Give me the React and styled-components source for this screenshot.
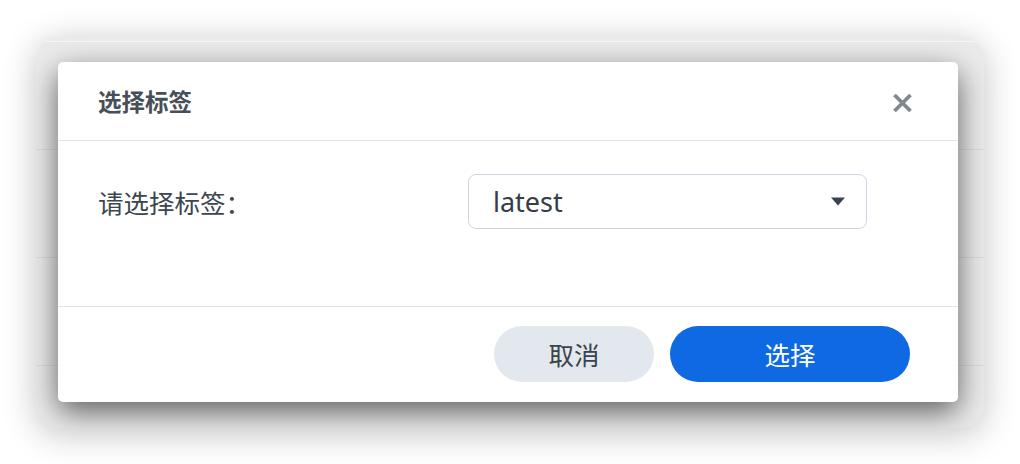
import React from "react";
import styled, { createGlobalStyle } from "styled-components";

const Global = createGlobalStyle`
  html, body { margin: 0; padding: 0; background: #ffffff; }
  body { font-family: "Noto Sans", "Noto Sans CJK SC", sans-serif; }
  * { box-sizing: border-box; }
`;

const Page = styled.div`
  width: 1020px;
  height: 464px;
  padding: 36px;
  background: #ffffff;
`;

const Window = styled.div`
  position: relative;
  width: 948px;
  height: 392px;
  border-radius: 24px;
  background: #ebebeb;
  box-shadow: 0 6px 34px rgba(0, 0, 0, 0.24);
  overflow: hidden;
`;

const TopStrip = styled.div`
  height: 6px;
  border-bottom: 1px solid #f4f6f8;
`;

const BgRow = styled.div`
  height: 108px;
  border-bottom: 1px solid #d9dee4;
`;

const Dialog = styled.div`
  position: absolute;
  left: 22px;
  top: 26px;
  width: 900px;
  height: 340px;
  background: #ffffff;
  border-radius: 5px;
  box-shadow: 0 10px 30px rgba(0, 0, 0, 0.6);
  display: flex;
  flex-direction: column;
`;

const Header = styled.div`
  height: 79px;
  flex: none;
  display: flex;
  align-items: center;
  justify-content: space-between;
  padding: 0 45px 0 40px;
  border-bottom: 1px solid #dbe3eb;
`;

const Title = styled.div`
  font-family: "Noto Sans CJK SC", sans-serif;
  font-weight: 700;
  font-size: 23.5px;
  color: #474f59;
  line-height: 1;
  margin-top: 2px;
`;

const CloseButton = styled.button`
  border: 0;
  background: none;
  padding: 0;
  width: 21px;
  height: 20px;
  display: flex;
  align-items: center;
  justify-content: center;
  margin-top: 4px;
  cursor: pointer;
`;

const Body = styled.div`
  height: 166px;
  flex: none;
  padding: 33px 0 0 40px;
  border-bottom: 1px solid #dbe3eb;
`;

const FieldRow = styled.div`
  display: grid;
  grid-template-columns: 370px 399px;
  align-items: center;
`;

const Label = styled.div`
  font-family: "Noto Sans CJK SC", sans-serif;
  font-size: 25.5px;
  color: #3c4550;
  line-height: 1;
`;

const Select = styled.div`
  height: 55px;
  border: 1.5px solid #cbd6e2;
  border-radius: 8px;
  display: flex;
  align-items: center;
  justify-content: space-between;
  padding: 0 20px 0 24px;
`;

const SelectValue = styled.span`
  font-family: "Noto Sans", sans-serif;
  font-size: 27px;
  color: #343d48;
  line-height: 1;
  margin-top: -1px;
`;

const Footer = styled.div`
  flex: 1;
  display: flex;
  align-items: center;
  justify-content: flex-end;
  gap: 16px;
  padding: 0 48px 1px 0;
`;

const Button = styled.button`
  height: 56px;
  width: ${(p) => p.$w}px;
  border: 0;
  border-radius: 28px;
  background: ${(p) => (p.$primary ? "#0f69e3" : "#e2e8ee")};
  color: ${(p) => (p.$primary ? "#ffffff" : "#3b434c")};
  font-family: "Noto Sans CJK SC", sans-serif;
  font-size: 25.5px;
  line-height: 1;
  padding: 0;
  cursor: pointer;
`;

export default function App() {
  return (
    <>
      <Global />
      <Page>
        <Window>
          <TopStrip />
          <BgRow />
          <BgRow />
          <BgRow />
          <Dialog>
            <Header>
              <Title>选择标签</Title>
              <CloseButton aria-label="关闭">
                <svg width="21" height="20" viewBox="0 0 21 20">
                  <path
                    d="M2.5 2 L18.5 18 M18.5 2 L2.5 18"
                    stroke="#80878f"
                    strokeWidth="3.8"
                    strokeLinecap="butt"
                  />
                </svg>
              </CloseButton>
            </Header>
            <Body>
              <FieldRow>
                <Label>请选择标签：</Label>
                <Select>
                  <SelectValue>latest</SelectValue>
                  <svg width="16" height="9" viewBox="0 0 16 9">
                    <path d="M1 0.5 H15 L8 8.5 Z" fill="#3a4350" />
                  </svg>
                </Select>
              </FieldRow>
            </Body>
            <Footer>
              <Button $w={160}>取消</Button>
              <Button $w={240} $primary>
                选择
              </Button>
            </Footer>
          </Dialog>
        </Window>
      </Page>
    </>
  );
}
